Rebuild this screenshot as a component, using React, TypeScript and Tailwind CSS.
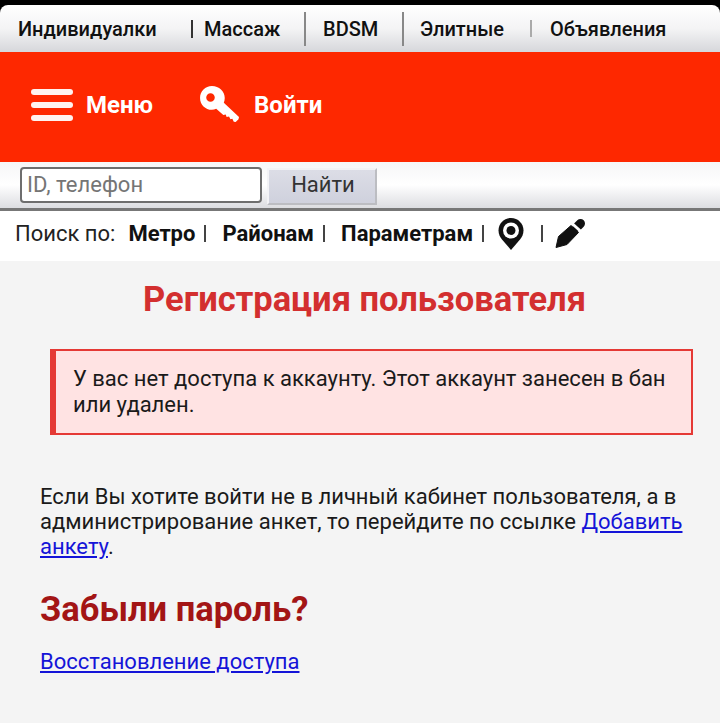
import type { ReactNode } from 'react'

function Sep({ className }: { className: string }) {
  return <span className={`block shrink-0 ${className}`} />
}

function NavBar() {
  return (
    <div className="bg-black pt-[5px]">
      <div className="flex h-[47px] items-center rounded-t-[8px] bg-gradient-to-b from-white via-[#f4f4f5] to-[#d6d7db] pl-[18px] text-[20px] font-medium text-[#111]">
        <span className="w-[139px] whitespace-nowrap">Индивидуалки</span>
        <Sep className="ml-[34px] h-[18px] w-[2px] bg-[#333]" />
        <span className="ml-[11px] w-[76px] whitespace-nowrap">Массаж</span>
        <Sep className="ml-[24px] h-[34px] w-[2px] bg-[#888]" />
        <span className="ml-[17px] w-[55px] whitespace-nowrap">BDSM</span>
        <Sep className="ml-[24px] h-[34px] w-[2px] bg-[#888]" />
        <span className="ml-[16px] w-[84px] whitespace-nowrap">Элитные</span>
        <Sep className="ml-[26px] h-[17px] w-[2px] bg-[#aaa]" />
        <span className="ml-[18px] whitespace-nowrap">Объявления</span>
      </div>
    </div>
  )
}

function MenuBar() {
  return (
    <div className="flex h-[110px] items-center bg-[#fe2800] pb-[4px] pl-[31px] text-[24px] font-bold text-white">
      <div className="flex w-[42px] flex-col gap-[7px]">
        <span className="h-[6px] rounded-full bg-[#fff3f0]" />
        <span className="h-[6px] rounded-full bg-[#fff3f0]" />
        <span className="h-[6px] rounded-full bg-[#fff3f0]" />
      </div>
      <span className="ml-[13px]">Меню</span>
      <svg className="ml-[46px]" width="42" height="38" viewBox="0 0 42 40" fill="#fff">
        <path d="M12.500 0C20 0 26 5.500 26 12.500c0 1.800-.4 3.500-1 5L41 32.500 40.500 35l-3 3-2-.5-1.500-3-2 .5-1.500-3-2.500.5-1-2.500-2.500.5L17 24c-1.400.6-3 1-4.500 1C5.500 25 0 19.500 0 12.500S5.500 0 12.500 0ZM11 7.500a4.500 4.500 0 1 0 0 9 4.500 4.500 0 0 0 0-9Z" fillRule="evenodd" />
      </svg>
      <span className="ml-[13px]">Войти</span>
    </div>
  )
}

function SearchBar() {
  return (
    <div className="flex h-[49px] items-start border-b-[3px] border-[#777] bg-gradient-to-b from-[#f6f6f7] via-white to-[#dcdde1] pl-[20px] pt-[5px]">
      <input
        placeholder="ID, телефон"
        className="h-[36px] w-[242px] rounded-[4px] border-2 border-[#6e6e6e] bg-white px-[5px] pb-[2px] text-[22px] text-[#333] placeholder:text-[#757575]"
      />
      <button className="ml-[5px] mt-[1px] flex h-[37px] w-[110px] items-start justify-center border-2 border-t-[#f3f3f6] border-r-[#bcbdc2] border-b-[#bcbdc2] border-l-[#f3f3f6] bg-gradient-to-b from-[#dcdde6] to-[#cfd1dd] pl-[2px] text-[22px] leading-[30px] font-normal text-[#333]">
        Найти
      </button>
    </div>
  )
}

function SearchLink({ children }: { children: ReactNode }) {
  return <span className="font-bold text-[#111]">{children}</span>
}

function FilterRow() {
  return (
    <div className="flex h-[50px] items-center bg-white pb-[5px] pl-[15px] text-[22px] text-[#222]">
      <span className="whitespace-nowrap">Поиск по:</span>
      <span className="ml-[13px] whitespace-nowrap"><SearchLink>Метро</SearchLink></span>
      <Sep className="ml-[9px] h-[17px] w-[2px] bg-[#444]" />
      <span className="ml-[16px] whitespace-nowrap"><SearchLink>Районам</SearchLink></span>
      <Sep className="ml-[9px] h-[17px] w-[2px] bg-[#444]" />
      <span className="ml-[16px] whitespace-nowrap"><SearchLink>Параметрам</SearchLink></span>
      <Sep className="ml-[9px] h-[17px] w-[2px] bg-[#444]" />
      <svg className="ml-[14px]" width="26" height="32" viewBox="0 0 26 32">
        <path d="M13 0C6 0 .5 5.500.5 12.500c0 3.500 1.500 6.500 3.500 9L13 32l9-10.500c2-2.500 3.500-5.500 3.500-9C25.500 5.500 20 0 13 0Z" fill="#111" />
        <circle cx="13" cy="12.500" r="8" fill="#fff" />
        <circle cx="13" cy="12.500" r="4.500" fill="#111" />
      </svg>
      <Sep className="ml-[17px] h-[17px] w-[2px] bg-[#444]" />
      <svg className="ml-[12px]" width="30" height="30" viewBox="0 0 30 30">
        <path d="M22 8l3.500-3.500" stroke="#111" strokeWidth="9" strokeLinecap="round" />
        <path d="M16 3.500l11 10" stroke="#fff" strokeWidth="3" />
        <path d="M1 28.500 3.500 17.500 16 6.500l7.500 7L12 25.500Z" fill="#111" stroke="#111" strokeLinejoin="round" />
      </svg>
    </div>
  )
}

export default function App() {
  return (
    <div className="min-h-[723px] bg-[#f4f4f4] font-['Roboto',sans-serif]">
      <NavBar />
      <MenuBar />
      <SearchBar />
      <FilterRow />

      <h1 className="mt-[18px] pl-[9px] text-center text-[34.5px] leading-[40px] font-bold text-[#d32f2f]">
        Регистрация пользователя
      </h1>

      <div className="ml-[50px] mr-[27px] mt-[30px] border-2 border-l-[6px] border-[#e53935] bg-[#ffe3e3] py-[15px] pl-[17px] pr-[20px] text-[22px] leading-[26px] text-[#1a1a1a]">
        У вас нет доступа к аккаунту. Этот аккаунт занесен в бан или удален.
      </div>

      <p className="ml-[40px] mr-[36px] mt-[49px] text-[22px] leading-[25px] text-[#1a1a1a]">
        Если Вы хотите войти не в личный кабинет пользователя, а в администрирование анкет, то перейдите по ссылке{' '}
        <a href="#" className="text-[#1414d8] underline">Добавить анкету</a>.
      </p>

      <h2 className="ml-[40px] mt-[30px] text-[34.5px] leading-[40px] font-bold text-[#a31515]">Забыли пароль?</h2>

      <p className="ml-[40px] mt-[20px] text-[22px] leading-[26px]">
        <a href="#" className="text-[#1414d8] underline">Восстановление доступа</a>
      </p>
    </div>
  )
}
